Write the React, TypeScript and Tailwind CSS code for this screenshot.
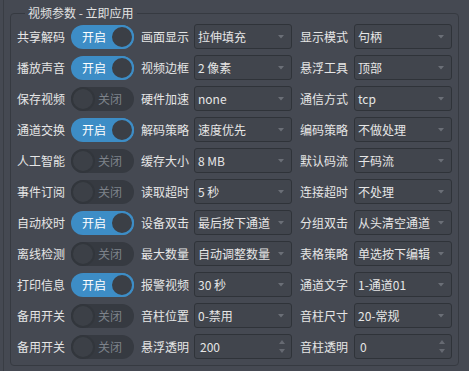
import React from "react";

type Cell = { label: string; on: boolean; l2: string; v2: string; l3: string; v3: string; spin?: boolean };

const rows: Cell[] = [
  { label: "共享解码", on: true, l2: "画面显示", v2: "拉伸填充", l3: "显示模式", v3: "句柄" },
  { label: "播放声音", on: true, l2: "视频边框", v2: "2 像素", l3: "悬浮工具", v3: "顶部" },
  { label: "保存视频", on: false, l2: "硬件加速", v2: "none", l3: "通信方式", v3: "tcp" },
  { label: "通道交换", on: true, l2: "解码策略", v2: "速度优先", l3: "编码策略", v3: "不做处理" },
  { label: "人工智能", on: false, l2: "缓存大小", v2: "8 MB", l3: "默认码流", v3: "子码流" },
  { label: "事件订阅", on: false, l2: "读取超时", v2: "5 秒", l3: "连接超时", v3: "不处理" },
  { label: "自动校时", on: true, l2: "设备双击", v2: "最后按下通道", l3: "分组双击", v3: "从头清空通道" },
  { label: "离线检测", on: false, l2: "最大数量", v2: "自动调整数量", l3: "表格策略", v3: "单选按下编辑" },
  { label: "打印信息", on: true, l2: "报警视频", v2: "30 秒", l3: "通道文字", v3: "1-通道01" },
  { label: "备用开关", on: false, l2: "音柱位置", v2: "0-禁用", l3: "音柱尺寸", v3: "20-常规" },
  { label: "备用开关", on: false, l2: "悬浮透明", v2: "200", l3: "音柱透明", v3: "0", spin: true },
];

function Toggle({ on }: { on: boolean }) {
  if (on) {
    return (
      <div className="relative flex h-[24px] w-[63px] items-center rounded-full bg-[#3d8dc6]">
        <span className="pl-[11px] text-[12px] leading-none text-white">开启</span>
        <div className="absolute right-0 top-0 h-[24px] w-[24px] rounded-full border-[2px] border-[#3d8dc6] bg-[#3b3f46]" />
      </div>
    );
  }
  return (
    <div className="relative flex h-[24px] w-[63px] items-center justify-end rounded-full bg-[#363a41]">
      <div className="absolute left-0 top-0 h-[24px] w-[24px] rounded-full border-[2px] border-[#32363c] bg-[#3c4047]" />
      <span className="pr-[12px] text-[12px] leading-none text-[#7d828a]">关闭</span>
    </div>
  );
}

function Combo({ value, spin }: { value: string; spin?: boolean }) {
  return (
    <div className="relative flex h-[25px] w-[98px] items-center rounded-[3px] border border-[#2f3339] bg-[#41454d]">
      <span className={`${spin ? "pl-[5px]" : "pl-[3px]"} text-[12px] leading-none text-[#e6e6e6] whitespace-nowrap`}>{value}</span>
      {spin ? (
        <div className="absolute right-[6px] top-[5px] flex flex-col gap-[5px]">
          <svg width="6" height="4" viewBox="0 0 6 4"><path d="M0 4 L3 0 L6 4 Z" fill="#666a72" /></svg>
          <svg width="6" height="4" viewBox="0 0 6 4"><path d="M0 0 L3 4 L6 0 Z" fill="#666a72" /></svg>
        </div>
      ) : (
        <svg className="absolute right-[7px] top-[10px]" width="6" height="4" viewBox="0 0 6 4">
          <path d="M0 0 L3 3.5 L6 0 Z" fill="#6b6f77" />
        </svg>
      )}
    </div>
  );
}

export default function App() {
  return (
    <div
      className="relative h-[371px] w-[469px] overflow-hidden bg-[#454952]"
      style={{ fontFamily: '"Noto Sans CJK SC", "Noto Sans", sans-serif' }}
    >
      <div className="absolute left-[3px] top-0 h-full w-px bg-[#393d44]" />
      <div className="pl-[10px] pt-[6px]">
        <fieldset className="h-[360px] w-[449px] rounded-[4px] border border-[#363a41] pl-[6px] pt-[4px]">
          <legend className="ml-[8px] px-[3px] text-[12px] leading-[14px] text-[#e2e2e2]">视频参数 - 立即应用</legend>
          <div className="flex flex-col gap-[6px]">
            {rows.map((r, i) => (
              <div key={i} className="flex h-[25px] items-center text-[12px] text-[#e6e6e6]">
                <span className="w-[48px] whitespace-nowrap">{r.label}</span>
                <div className="ml-[6px]"><Toggle on={r.on} /></div>
                <span className="ml-[7px] w-[48px] whitespace-nowrap">{r.l2}</span>
                <div className="ml-[5px]"><Combo value={r.v2} spin={r.spin} /></div>
                <span className="ml-[8px] w-[48px] whitespace-nowrap">{r.l3}</span>
                <div className="ml-[6px]"><Combo value={r.v3} spin={r.spin} /></div>
              </div>
            ))}
          </div>
        </fieldset>
      </div>
    </div>
  );
}
